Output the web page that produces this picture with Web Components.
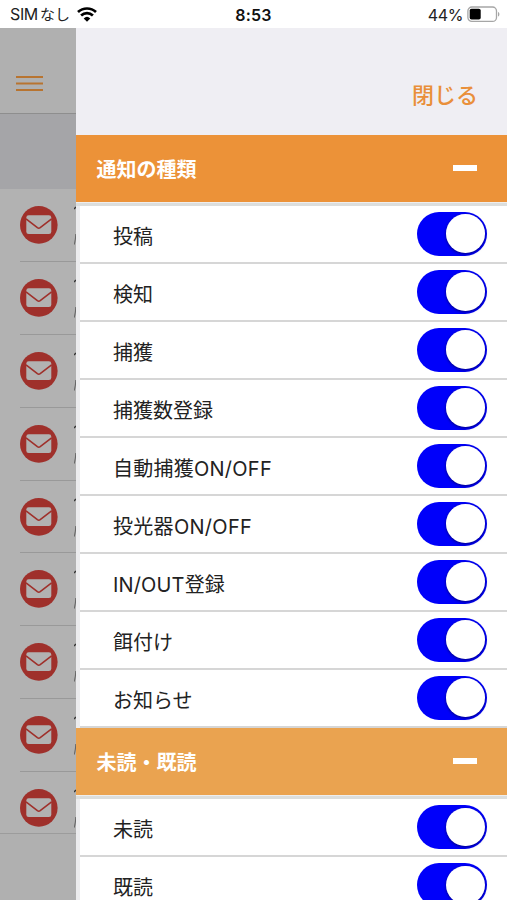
<!DOCTYPE html>
<html lang="ja">
<head>
<meta charset="utf-8">
<title>通知フィルター</title>
<style>
html,body{margin:0;height:100%;overflow:hidden}
body{font-family:Inter,"Noto Sans CJK JP",sans-serif;background:#fff;color:#222}
</style>
</head>
<body>
<phone-screen></phone-screen>
<script>
const define = (name, html) => customElements.define(name, class extends HTMLElement {
  connectedCallback() {
    if (this.shadowRoot) return;
    this.attachShadow({ mode: 'open' }).innerHTML = typeof html === 'function' ? html(this) : html;
  }
});

define('status-bar', `
<style>
:host{display:grid;grid-template-columns:1fr auto 1fr;align-items:center;height:28px;background:#fff;box-sizing:border-box;padding:1px 7px 0 10px;font-size:15px;line-height:26px;color:#222}
.l,.r{display:flex;align-items:center}
.l{gap:7px}.r{justify-content:flex-end;gap:4px}
.sim{font-size:16px;letter-spacing:-.35px}
.jp{font-size:15px;letter-spacing:0;margin-left:2px}
b{font-weight:600;font-size:16px;color:#111;letter-spacing:.25px;margin-right:3px}
.pct{font-size:16px;letter-spacing:-.35px}
svg{display:block}
</style>
<div class="l"><span class="sim">SIM<span class="jp">なし</span></span>
<svg width="20" height="15" viewBox="0 0 20 15"><g fill="none" stroke="#000" stroke-width="2.7"><path d="M1 5.1C6.1.3 13.9.3 19 5.1"/><path d="M4.1 8.6c3.4-3.2 8.4-3.2 11.8 0"/></g><path d="M6.7 11.4a4.8 4.8 0 0 1 6.6 0L10 14.8z"/></svg></div>
<b>8:53</b>
<div class="r"><span class="pct">44%</span>
<svg width="33" height="17" viewBox="0 0 33 17"><rect x=".9" y="1" width="28.6" height="14.4" rx="4" fill="#fff" stroke="#a6a6a6" stroke-width="1.3"/><rect x="2.7" y="2.8" width="11" height="10.8" rx="1.8"/><path d="M31 6v4.6c1.9-.6 1.9-4 0-4.6z" fill="#a6a6a6"/></svg></div>`);

define('mail-row', `
<style>
:host{display:flex;align-items:center;box-sizing:border-box;height:72.8px;flex:none;margin-left:20px;border-bottom:1.4px solid #999;justify-content:space-between}
svg{display:block}
</style>
<svg width="38" height="38" viewBox="0 0 38 38"><circle cx="18.8" cy="18.9" r="18.8" fill="#9f302b"/><rect x="6.3" y="9.3" width="25" height="18.8" rx="2.4" fill="#b2b2b2"/><path d="M6 12.8l11.4 8.9q1.4 1 2.8 0l11.4-8.9" fill="none" stroke="#9f302b" stroke-width="1.6"/></svg>
<svg width="2" height="48" viewBox="0 0 2 48"><path d="M0 8L2 6" stroke="#333" stroke-width="1.5"/><path d="M.2 43.5Q1.6 39 1.8 33" fill="none" stroke="#666" stroke-width="1.1"/></svg>`);

define('mail-page', `
<style>
:host{display:flex;flex-direction:column;width:76px;flex:none;background:#b0b0b0;overflow:hidden}
.nav{height:86px;flex:none;box-sizing:border-box;border-bottom:1px solid #8e8e8e;padding:47px 0 0 15.5px}
.sub{height:74.5px;flex:none;background:#a5a5a8}
.list{height:645.5px;flex:none;box-sizing:border-box;overflow:hidden;background:#b2b2b2;border-bottom:1.3px solid #9c9c9c;padding-top:1px;display:flex;flex-direction:column}
svg{display:block}
</style>
<div class="nav"><svg width="27" height="18" viewBox="0 0 27 18"><path d="M0 1.9h27M0 8.5h27M0 15.1h27" stroke="#b87430" stroke-width="2"/></svg></div>
<div class="sub"></div>
<div class="list">${'<mail-row></mail-row>'.repeat(9)}</div>`);

define('toggle-switch', `
<style>
:host{display:flex;box-sizing:border-box;width:70px;height:44px;border-radius:22px;background:#0000fa;padding:2.6px 2.4px;justify-content:flex-end}
i{display:block;width:38.6px;height:38.6px;border-radius:50%;background:#fff;box-shadow:0 1px 3px rgba(0,0,30,.55)}
</style><i></i>`);

define('filter-row', `
<style>
:host{display:flex;align-items:center;justify-content:space-between;box-sizing:border-box;height:58px;flex:none;margin-left:4px;padding:0 20px 0 33px;border-bottom:2px solid #d6d6d6;background:#fff;font-size:20px;color:#222}
span{line-height:30px;padding-top:6px;letter-spacing:var(--track,0)}
</style><span><slot></slot></span><toggle-switch></toggle-switch>`);

define('filter-section', el => `
<style>
:host{display:flex;flex-direction:column;flex:none;background:#ececee}
header{display:flex;align-items:center;justify-content:space-between;height:67.3px;box-sizing:border-box;padding:0 30px 0 20.5px;background:var(--head,#ec9238);color:#fff;font-weight:700;font-size:20px;line-height:30px}
header span{padding-top:3px}
header i{display:block;width:24.5px;height:6px;background:#fff}
.rows{display:flex;flex-direction:column;border-top:1px solid #eee;background:#ececee}
.rows::before{content:"";height:3px;background:#dcdedd}
</style>
<header><span>${el.getAttribute('heading')}</span><i></i></header><div class="rows"><slot></slot></div>`);

define('filter-drawer', `
<style>
:host{display:flex;flex-direction:column;flex:1;min-width:0;overflow:hidden;background:#efeef3}
.top{height:106.5px;box-sizing:border-box;flex:none;display:flex;justify-content:flex-end;padding:50px 29px 0 0;font-size:22px;font-weight:500;line-height:34px;color:#e98f3a}
</style>
<div class="top">閉じる</div>
<filter-section heading="通知の種類">
<filter-row>投稿</filter-row><filter-row>検知</filter-row><filter-row>捕獲</filter-row><filter-row>捕獲数登録</filter-row>
<filter-row style="--track:.25px">自動捕獲ON/OFF</filter-row><filter-row style="--track:.3px">投光器ON/OFF</filter-row><filter-row style="--track:.15px">IN/OUT登録</filter-row><filter-row>餌付け</filter-row><filter-row>お知らせ</filter-row>
</filter-section>
<filter-section heading="未読・既読" style="--head:#eaa350">
<filter-row>未読</filter-row><filter-row>既読</filter-row>
</filter-section>`);

define('phone-screen', `
<style>
:host{display:flex;flex-direction:column;width:507px;height:900px;overflow:hidden}
main{display:flex;flex:1;min-height:0}
</style>
<status-bar></status-bar><main><mail-page></mail-page><filter-drawer></filter-drawer></main>`);
</script>
</body>
</html>
